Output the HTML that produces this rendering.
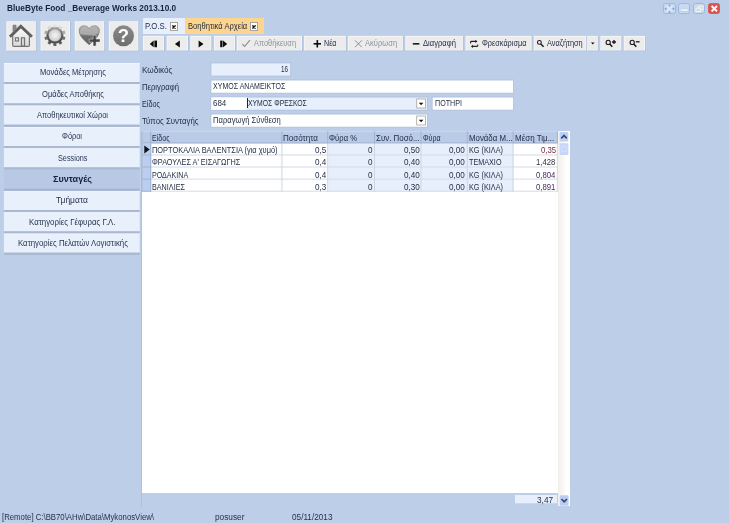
<!DOCTYPE html>
<html lang="el">
<head>
<meta charset="utf-8">
<title>BlueByte Food _Beverage Works 2013.10.0</title>
<style>
html,body{margin:0;padding:0;background:#bdcfe8;}
#w{position:absolute;left:0;top:0;width:729px;height:523px;filter:blur(0.4px);}
body{width:729px;height:523px;overflow:hidden;background:#bdcfe8;position:relative;
 font-family:"Liberation Sans","DejaVu Sans",sans-serif;font-size:8.8px;color:#1e2a40;}
.a{position:absolute;}
.x{position:absolute;white-space:pre;transform-origin:0 50%;}
.cb{position:absolute;width:8px;height:9px;background:#fff;border:1px solid #a9a59c;box-sizing:border-box}
.wc{position:absolute;top:3.3px;width:12.3px;height:10.8px;box-sizing:border-box;border:1px solid #9db8de;border-radius:2.5px;background:#c7daf3}
</style>
</head>
<body>
<div id="w">
<div class="x" style="left:6.60px;top:1.60px;font-size:9.4px;line-height:12px;transform:scaleX(0.8831);font-weight:bold;color:#15233f;">BlueByte Food _Beverage Works 2013.10.0</div>
<div class="wc" style="left:663.3px"></div>
<div class="wc" style="left:678.2px"></div>
<div class="wc" style="left:693.2px"></div>
<div class="wc" style="left:708.2px;background:#d9534f;border-color:#d2605f"></div>
<svg class="a" style="left:660px;top:0" width="64" height="18" viewBox="660 0 64 18">
<path d="M666.6 6L672.4 11.4M672.4 6L666.6 11.4" stroke="#dfeaf9" stroke-width="1.3" fill="none"/>
<g fill="#6f9ad6"><circle cx="669.5" cy="5.3" r="0.9"/><circle cx="669.5" cy="12.1" r="0.9"/><circle cx="665.6" cy="8.7" r="0.9"/><circle cx="673.4" cy="8.7" r="0.9"/></g>
<rect x="680.4" y="9" width="7.8" height="2.1" rx="0.8" fill="#fbfbee" stroke="#a9bfdf" stroke-width="0.4"/>
<g fill="none" stroke="#f3f3e6" stroke-width="1.1"><rect x="698.6" y="6.2" width="4.4" height="3.4"/><rect x="696" y="8.2" width="4.4" height="3.4" fill="#c7daf3"/></g>
<path d="M711.6 6L717 11.4M717 6L711.6 11.4" stroke="#fff" stroke-width="2"/>
</svg>
<svg class="a" style="left:0;top:16px" width="146" height="40" viewBox="0 16 146 40"><rect x="7.10" y="22.00" width="29.40" height="29.30" fill="#a9bbd8"/><rect x="6.40" y="21.30" width="29.40" height="29.30" fill="#f8f8f8"/><rect x="7.20" y="22.10" width="27.80" height="27.70" fill="#ececec"/><rect x="41.30" y="22.00" width="29.40" height="29.30" fill="#a9bbd8"/><rect x="40.60" y="21.30" width="29.40" height="29.30" fill="#f8f8f8"/><rect x="41.40" y="22.10" width="27.80" height="27.70" fill="#ececec"/><rect x="75.50" y="22.00" width="29.40" height="29.30" fill="#a9bbd8"/><rect x="74.80" y="21.30" width="29.40" height="29.30" fill="#f8f8f8"/><rect x="75.60" y="22.10" width="27.80" height="27.70" fill="#ececec"/><rect x="109.60" y="22.00" width="29.40" height="29.30" fill="#a9bbd8"/><rect x="108.90" y="21.30" width="29.40" height="29.30" fill="#f8f8f8"/><rect x="109.70" y="22.10" width="27.80" height="27.70" fill="#ececec"/></svg>
<svg class="a" style="left:0;top:0" width="146" height="56" viewBox="0 0 146 56">
<defs>
<linearGradient id="gv" x1="0" y1="0" x2="0" y2="1"><stop offset="0" stop-color="#a8a8a8"/><stop offset="0.5" stop-color="#5e5e5e"/><stop offset="1" stop-color="#454545"/></linearGradient>
<linearGradient id="gh" x1="0" y1="0" x2="0" y2="1"><stop offset="0" stop-color="#a8a8a8"/><stop offset="0.45" stop-color="#8a8a8a"/><stop offset="0.55" stop-color="#707070"/><stop offset="1" stop-color="#626262"/></linearGradient>
<linearGradient id="gq" x1="0" y1="0" x2="0" y2="1"><stop offset="0" stop-color="#8a8a8a"/><stop offset="1" stop-color="#6e6e6e"/></linearGradient>
<linearGradient id="gb" x1="0" y1="0" x2="0" y2="1"><stop offset="0" stop-color="#fafafa"/><stop offset="1" stop-color="#dadada"/></linearGradient>
<radialGradient id="gr" cx="0.5" cy="0.5" r="0.5"><stop offset="0" stop-color="#ffffff"/><stop offset="0.6" stop-color="#e4e4e4"/><stop offset="1" stop-color="#bdbdbd"/></radialGradient>
</defs>
<!-- house -->
<path d="M13 31.8V25.2H16.1V29" fill="#8a8a8a" stroke="#6a6a6a" stroke-width="0.6"/>
<path d="M12.7 35.2V45.3Q12.7 46.3 13.7 46.3H28.4Q29.4 46.3 29.4 45.3V35.2L21 27.2Z" fill="url(#gb)" stroke="#757575" stroke-width="1.2"/>
<path d="M9.9 36.7L20.8 26.2L31.9 36.7" fill="none" stroke="#606060" stroke-width="2.8" stroke-linejoin="miter"/>
<rect x="15.4" y="37.8" width="3.1" height="3.2" fill="#e2e2e2" stroke="#707070" stroke-width="1.1"/>
<rect x="21.4" y="37.8" width="3.2" height="8.2" fill="#d2d2d2" stroke="#707070" stroke-width="1.1"/>
<!-- gear -->
<g transform="translate(54.9 35.3)">
<circle r="8.5" fill="url(#gv)"/>
<g fill="#5a5a5a">
<rect x="-1.5" y="7.9" width="3" height="2.7"/>
<rect x="-1.5" y="7.9" width="3" height="2.7" transform="rotate(36)"/>
<rect x="-1.5" y="7.9" width="3" height="2.7" transform="rotate(-36)"/>
<rect x="-1.5" y="7.9" width="3" height="2.7" transform="rotate(72)" fill="#6e6e6e"/>
<rect x="-1.5" y="7.9" width="3" height="2.7" transform="rotate(-72)" fill="#6e6e6e"/>
<rect x="-1.5" y="7.9" width="3" height="2.7" transform="rotate(108)" fill="#a6a6a6"/>
<rect x="-1.5" y="7.9" width="3" height="2.7" transform="rotate(-108)" fill="#a6a6a6"/>
<rect x="-1.5" y="7.9" width="3" height="2.7" transform="rotate(144)" fill="#d6d6d6"/>
<rect x="-1.5" y="7.9" width="3" height="2.7" transform="rotate(-144)" fill="#d6d6d6"/>
<rect x="-1.5" y="7.9" width="3" height="2.7" transform="rotate(180)" fill="#e0e0e0"/>
</g>
<circle r="6.3" fill="url(#gr)"/>
<circle r="3.4" fill="none" stroke="#d2d2d2" stroke-width="0.7"/>
<circle r="1.3" fill="#fcfcfc" stroke="#cfcfcf" stroke-width="0.5"/>
</g>
<!-- heart -->
<path d="M89.2 44.9C85 41.5 78.7 36.5 78.7 30.6C78.7 27.2 81.3 25.2 84.2 25.2C86.4 25.2 88.2 26.3 89.2 28C90.2 26.3 92 25.2 94.3 25.2C97.3 25.2 99.9 27.2 99.9 30.6C99.9 36.5 93.5 41.5 89.2 44.9Z" fill="url(#gh)"/>
<path d="M80.2 33.8C79.2 29.5 81.6 26.4 84.4 26.4C86.6 26.4 88.3 27.6 89.2 29.4C90.2 27.6 91.9 26.4 94.2 26.4C97 26.4 99.3 29.2 98.4 33.2C94 35.5 86 36 80.2 33.8Z" fill="#c2c2c2" opacity="0.55"/>
<path d="M93.1 35.2H96.1V39.1H100V42.1H96.1V46H93.1V42.1H89.2V39.1H93.1Z" fill="#454545" stroke="#ececec" stroke-width="0.5"/>
<!-- help -->
<circle cx="123.5" cy="35.8" r="10.5" fill="url(#gq)"/>
<text x="123.5" y="42.4" text-anchor="middle" font-family="Liberation Sans, sans-serif" font-weight="bold" font-size="18.5" fill="#fff">?</text>
</svg>
<div class="a" style="left:142.7px;top:18.2px;width:41.9px;height:16.2px;background:#e6effb"></div>
<div class="x" style="left:145.00px;top:20.20px;font-size:8.8px;line-height:12px;transform:scaleX(0.8837);">P.O.S.</div>
<div class="cb" style="left:170px;top:22px"></div>
<div class="a" style="left:185.4px;top:18.2px;width:78.3px;height:16.2px;background:#fdd58e"></div>
<div class="x" style="left:187.80px;top:20.20px;font-size:8.8px;line-height:12px;transform:scaleX(0.8623);">Βοηθητικά Αρχεία</div>
<div class="cb" style="left:250px;top:22px"></div>
<svg class="a" style="left:172.1px;top:24.7px" width="4" height="4" viewBox="0 0 4 4"><path d="M0.4 0.4L3.6 3.6M3.6 0.4L0.4 3.6" stroke="#111" stroke-width="1.4"/></svg>
<svg class="a" style="left:252.1px;top:24.7px" width="4" height="4" viewBox="0 0 4 4"><path d="M0.4 0.4L3.6 3.6M3.6 0.4L0.4 3.6" stroke="#111" stroke-width="1.4"/></svg>
<svg class="a" style="left:140px;top:32px" width="510" height="22" viewBox="140 32 510 22"><rect x="143.70" y="36.60" width="21.00" height="14.60" fill="#a9bbd8"/><rect x="143.00" y="35.90" width="21.00" height="14.60" fill="#f8f8f8"/><rect x="143.80" y="36.70" width="19.40" height="13.00" fill="#ececec"/><rect x="167.40" y="36.60" width="21.30" height="14.60" fill="#a9bbd8"/><rect x="166.70" y="35.90" width="21.30" height="14.60" fill="#f8f8f8"/><rect x="167.50" y="36.70" width="19.70" height="13.00" fill="#ececec"/><rect x="191.00" y="36.60" width="21.10" height="14.60" fill="#a9bbd8"/><rect x="190.30" y="35.90" width="21.10" height="14.60" fill="#f8f8f8"/><rect x="191.10" y="36.70" width="19.50" height="13.00" fill="#ececec"/><rect x="214.70" y="36.60" width="21.00" height="14.60" fill="#a9bbd8"/><rect x="214.00" y="35.90" width="21.00" height="14.60" fill="#f8f8f8"/><rect x="214.80" y="36.70" width="19.40" height="13.00" fill="#ececec"/><rect x="237.50" y="36.60" width="65.20" height="14.60" fill="#a9bbd8"/><rect x="236.80" y="35.90" width="65.20" height="14.60" fill="#f8f8f8"/><rect x="237.60" y="36.70" width="63.60" height="13.00" fill="#ececec"/><rect x="304.80" y="36.60" width="41.70" height="14.60" fill="#a9bbd8"/><rect x="304.10" y="35.90" width="41.70" height="14.60" fill="#f8f8f8"/><rect x="304.90" y="36.70" width="40.10" height="13.00" fill="#ececec"/><rect x="348.60" y="36.60" width="55.00" height="14.60" fill="#a9bbd8"/><rect x="347.90" y="35.90" width="55.00" height="14.60" fill="#f8f8f8"/><rect x="348.70" y="36.70" width="53.40" height="13.00" fill="#ececec"/><rect x="406.10" y="36.60" width="57.50" height="14.60" fill="#a9bbd8"/><rect x="405.40" y="35.90" width="57.50" height="14.60" fill="#f8f8f8"/><rect x="406.20" y="36.70" width="55.90" height="13.00" fill="#ececec"/><rect x="466.20" y="36.60" width="66.10" height="14.60" fill="#a9bbd8"/><rect x="465.50" y="35.90" width="66.10" height="14.60" fill="#f8f8f8"/><rect x="466.30" y="36.70" width="64.50" height="13.00" fill="#ececec"/><rect x="534.50" y="36.60" width="52.50" height="14.60" fill="#a9bbd8"/><rect x="533.80" y="35.90" width="52.50" height="14.60" fill="#f8f8f8"/><rect x="534.60" y="36.70" width="50.90" height="13.00" fill="#ececec"/><rect x="588.00" y="36.60" width="10.50" height="14.60" fill="#a9bbd8"/><rect x="587.30" y="35.90" width="10.50" height="14.60" fill="#f8f8f8"/><rect x="588.10" y="36.70" width="8.90" height="13.00" fill="#ececec"/><rect x="601.10" y="36.60" width="21.00" height="14.60" fill="#a9bbd8"/><rect x="600.40" y="35.90" width="21.00" height="14.60" fill="#f8f8f8"/><rect x="601.20" y="36.70" width="19.40" height="13.00" fill="#ececec"/><rect x="624.50" y="36.60" width="21.30" height="14.60" fill="#a9bbd8"/><rect x="623.80" y="35.90" width="21.30" height="14.60" fill="#f8f8f8"/><rect x="624.60" y="36.70" width="19.70" height="13.00" fill="#ececec"/></svg>
<div class="x" style="left:254.20px;top:37.30px;font-size:8.6px;line-height:12px;transform:scaleX(0.8607);color:#8d939c;">Αποθήκευση</div>
<div class="x" style="left:323.80px;top:37.30px;font-size:8.6px;line-height:12px;transform:scaleX(0.8258);">Νέα</div>
<div class="x" style="left:365.30px;top:37.30px;font-size:8.6px;line-height:12px;transform:scaleX(0.8813);color:#8d939c;">Ακύρωση</div>
<div class="x" style="left:422.70px;top:37.30px;font-size:8.6px;line-height:12px;transform:scaleX(0.8862);">Διαγραφή</div>
<div class="x" style="left:482.00px;top:37.30px;font-size:8.6px;line-height:12px;transform:scaleX(0.8528);">Φρεσκάρισμα</div>
<div class="x" style="left:547.30px;top:37.30px;font-size:8.6px;line-height:12px;transform:scaleX(0.8599);">Αναζήτηση</div>
<svg class="a" style="left:140px;top:34px" width="520" height="20" viewBox="140 34 520 20">
<g fill="#0c0c0c">
<path d="M149.8 43.9L153.7 40.6V47.2Z"/><rect x="154.4" y="40.6" width="2.6" height="6.6"/>
<path d="M174.9 43.9L179.8 40.4V47.4Z"/>
<path d="M203.5 43.9L198.6 40.4V47.4Z"/>
<rect x="220.2" y="40.6" width="2.3" height="6.6"/><path d="M227.2 43.9L223 40.6V47.2Z"/>
<rect x="313.6" y="43" width="7.4" height="1.6"/><rect x="316.5" y="40.1" width="1.6" height="7.4"/>
<rect x="412.8" y="43.1" width="6.6" height="1.5"/>
<path d="M591 42.6H594.6L592.8 44.6Z"/>
</g>
<path d="M242.2 43.8L244.6 46.4L250 40.2" fill="none" stroke="#8a8f96" stroke-width="1.1"/>
<path d="M355 40.4L361.8 47.2M361.8 40.4L355 47.2" fill="none" stroke="#8a8f96" stroke-width="1"/>
<g fill="none" stroke="#222" stroke-width="1.1">
<path d="M470.6 43.4V42.2Q470.6 41.4 471.4 41.4H476.6"/><path d="M475.4 39.8L477.4 41.4L475.4 43" fill="#222" stroke="none"/>
<path d="M477.8 44.4V45.6Q477.8 46.4 477 46.4H471.8"/><path d="M473 44.8L471 46.4L473 48" fill="#222" stroke="none"/>
</g>
<g fill="none" stroke="#1a1a1a">
<circle cx="539.4" cy="42.4" r="1.9" stroke-width="1.1"/><path d="M540.8 43.9L543.6 46.8" stroke-width="1.5"/>
<circle cx="608.2" cy="42.4" r="2.1" stroke-width="1.1"/><path d="M609.7 44L612.3 46.8" stroke-width="1.5"/>
<path d="M612 42H616M614 40V44" stroke-width="1.3"/>
<circle cx="632.2" cy="42.4" r="2.1" stroke-width="1.1"/><path d="M633.7 44L636.3 46.8" stroke-width="1.5"/>
<path d="M635.8 41.8H639.6" stroke-width="1.3"/>
</g>
</svg>
<svg class="a" style="left:0;top:56px" width="146" height="204" viewBox="0 56 146 204"><rect x="3.9" y="63.00" width="135.8" height="19.1" fill="#e7f0fb"/><rect x="3.9" y="63.00" width="135.8" height="0.7" fill="#f3f7fd"/><rect x="3.9" y="82.00" width="135.8" height="2.3" fill="#a9b9d1"/><rect x="3.9" y="84.33" width="135.8" height="19.1" fill="#e7f0fb"/><rect x="3.9" y="84.33" width="135.8" height="0.7" fill="#f3f7fd"/><rect x="3.9" y="103.33" width="135.8" height="2.3" fill="#a9b9d1"/><rect x="3.9" y="105.66" width="135.8" height="19.1" fill="#e7f0fb"/><rect x="3.9" y="105.66" width="135.8" height="0.7" fill="#f3f7fd"/><rect x="3.9" y="124.66" width="135.8" height="2.3" fill="#a9b9d1"/><rect x="3.9" y="126.99" width="135.8" height="19.1" fill="#e7f0fb"/><rect x="3.9" y="126.99" width="135.8" height="0.7" fill="#f3f7fd"/><rect x="3.9" y="145.99" width="135.8" height="2.3" fill="#a9b9d1"/><rect x="3.9" y="148.32" width="135.8" height="19.1" fill="#e7f0fb"/><rect x="3.9" y="148.32" width="135.8" height="0.7" fill="#f3f7fd"/><rect x="3.9" y="167.32" width="135.8" height="2.3" fill="#a9b9d1"/><rect x="3.9" y="169.65" width="135.8" height="19.1" fill="#b8c9e5"/><rect x="3.9" y="188.65" width="135.8" height="2.3" fill="#a5b6d0"/><rect x="3.9" y="190.98" width="135.8" height="19.1" fill="#e7f0fb"/><rect x="3.9" y="190.98" width="135.8" height="0.7" fill="#f3f7fd"/><rect x="3.9" y="209.98" width="135.8" height="2.3" fill="#a9b9d1"/><rect x="3.9" y="212.31" width="135.8" height="19.1" fill="#e7f0fb"/><rect x="3.9" y="212.31" width="135.8" height="0.7" fill="#f3f7fd"/><rect x="3.9" y="231.31" width="135.8" height="2.3" fill="#a9b9d1"/><rect x="3.9" y="233.64" width="135.8" height="19.1" fill="#e7f0fb"/><rect x="3.9" y="233.64" width="135.8" height="0.7" fill="#f3f7fd"/><rect x="3.9" y="252.64" width="135.8" height="2.3" fill="#a9b9d1"/></svg>
<div class="x" style="left:39.50px;top:66.40px;font-size:8.8px;line-height:12px;transform:scaleX(0.8614);color:#2a3550;">Μονάδες Μέτρησης</div>
<div class="x" style="left:41.50px;top:87.73px;font-size:8.8px;line-height:12px;transform:scaleX(0.8606);color:#2a3550;">Ομάδες Αποθήκης</div>
<div class="x" style="left:36.50px;top:109.06px;font-size:8.8px;line-height:12px;transform:scaleX(0.8532);color:#2a3550;">Αποθηκευτικοί Χώροι</div>
<div class="x" style="left:62.00px;top:130.39px;font-size:8.8px;line-height:12px;transform:scaleX(0.8416);color:#2a3550;">Φόροι</div>
<div class="x" style="left:57.50px;top:151.72px;font-size:8.8px;line-height:12px;transform:scaleX(0.8263);color:#2a3550;">Sessions</div>
<div class="x" style="left:53.00px;top:173.05px;font-size:9.6px;line-height:12px;transform:scaleX(0.9455);font-weight:bold;color:#15233f;">Συνταγές</div>
<div class="x" style="left:56.00px;top:194.38px;font-size:8.8px;line-height:12px;transform:scaleX(0.9615);color:#2a3550;">Τμήματα</div>
<div class="x" style="left:29.00px;top:215.71px;font-size:8.8px;line-height:12px;transform:scaleX(0.8939);color:#2a3550;">Κατηγορίες Γέφυρας Γ.Λ.</div>
<div class="x" style="left:17.60px;top:237.04px;font-size:8.8px;line-height:12px;transform:scaleX(0.8879);color:#2a3550;">Κατηγορίες Πελατών Λογιστικής</div>
<div class="x" style="left:142.00px;top:63.80px;font-size:8.8px;line-height:12px;transform:scaleX(0.9269);">Κωδικός</div>
<div class="x" style="left:142.00px;top:81.30px;font-size:8.8px;line-height:12px;transform:scaleX(0.8741);">Περιγραφή</div>
<div class="x" style="left:142.00px;top:98.20px;font-size:8.8px;line-height:12px;transform:scaleX(0.8234);">Είδος</div>
<div class="x" style="left:142.00px;top:114.60px;font-size:8.8px;line-height:12px;transform:scaleX(0.8889);">Τύπος Συνταγής</div>
<svg class="a" style="left:205px;top:58px" width="315" height="74" viewBox="205 58 315 74"><rect x="210.95" y="62.95" width="79.80" height="13.1" fill="#e6effb" stroke="#a7b8d5" stroke-width="0.7"/><rect x="210.95" y="80.05" width="302.60" height="13.1" fill="#fff" stroke="#a7b8d5" stroke-width="0.7"/><rect x="210.95" y="97.05" width="216.40" height="13.1" fill="#e6effb" stroke="#a7b8d5" stroke-width="0.7"/><rect x="211.3" y="97.4" width="35.4" height="12.4" fill="#fff"/><rect x="432.15" y="97.05" width="81.40" height="13.1" fill="#fff" stroke="#a7b8d5" stroke-width="0.7"/><rect x="210.95" y="114.05" width="216.40" height="13.1" fill="#fff" stroke="#a7b8d5" stroke-width="0.7"/></svg>
<div class="x" style="left:280.60px;top:63.40px;font-size:9px;line-height:12px;transform:scaleX(0.6989);">16</div>
<div class="x" style="left:212.70px;top:80.30px;font-size:9px;line-height:12px;transform:scaleX(0.7818);">ΧΥΜΟΣ ΑΝΑΜΕΙΚΤΟΣ</div>
<div class="x" style="left:212.70px;top:97.30px;font-size:9px;line-height:12px;transform:scaleX(0.8848);">684</div>
<div class="a" style="left:246.8px;top:98.4px;width:1px;height:9.8px;background:#222"></div>
<div class="x" style="left:248.20px;top:97.30px;font-size:9px;line-height:12px;transform:scaleX(0.7576);">ΧΥΜΟΣ ΦΡΕΣΚΟΣ</div>
<div class="x" style="left:434.50px;top:97.30px;font-size:9px;line-height:12px;transform:scaleX(0.7938);">ΠΟΤΗΡΙ</div>
<div class="x" style="left:212.70px;top:114.30px;font-size:9px;line-height:12px;transform:scaleX(0.8462);">Παραγωγή Σύνθεση</div>
<svg class="a" style="left:412px;top:94px" width="18" height="36" viewBox="412 94 18 36"><rect x="416.7" y="99.00" width="8.8" height="9" fill="#fff" stroke="#a9a59c" stroke-width="0.8"/><path d="M418.8 102.70H423.4L421.1 105.30Z" fill="#111"/><rect x="416.7" y="116.00" width="8.8" height="9" fill="#fff" stroke="#a9a59c" stroke-width="0.8"/><path d="M418.8 119.70H423.4L421.1 122.30Z" fill="#111"/></svg>
<div class="a" style="left:142px;top:131px;width:428.2px;height:361.6px;background:#fff"></div><div class="a" style="left:140.6px;top:131.5px;width:1.4px;height:375.5px;background:#acc0e0"></div>
<div class="a" style="left:558.2px;top:131px;width:12px;height:375.4px;background:linear-gradient(90deg,#f1efe9,#ffffff 75%)"></div>
<svg class="a" style="left:138px;top:128px" width="424" height="68" viewBox="138 128 424 68"><rect x="142.3" y="131.3" width="415.5" height="12.1" fill="#b9cbe6"/><rect x="142.3" y="131.3" width="415.5" height="0.8" fill="#c9d8ee"/><rect x="142.3" y="143.4" width="8.9" height="48.3" fill="#bccef0"/><rect x="328.2" y="143.4" width="185.3" height="48.3" fill="#e6effb"/><rect x="151.2" y="154.5" width="406.6" height="1" fill="#d3dbe8"/><rect x="142.3" y="154.5" width="8.9" height="1" fill="#9fb3d2"/><rect x="151.2" y="166.5" width="406.6" height="1" fill="#d3dbe8"/><rect x="142.3" y="166.5" width="8.9" height="1" fill="#9fb3d2"/><rect x="151.2" y="178.6" width="406.6" height="1" fill="#d3dbe8"/><rect x="142.3" y="178.6" width="8.9" height="1" fill="#9fb3d2"/><rect x="151.2" y="190.7" width="406.6" height="1" fill="#d3dbe8"/><rect x="142.3" y="190.7" width="8.9" height="1" fill="#9fb3d2"/><rect x="281.4" y="143.4" width="1" height="48.3" fill="#cdd6e4"/><rect x="327.2" y="143.4" width="1" height="48.3" fill="#cdd6e4"/><rect x="374.0" y="143.4" width="1" height="48.3" fill="#cdd6e4"/><rect x="420.5" y="143.4" width="1" height="48.3" fill="#cdd6e4"/><rect x="466.8" y="143.4" width="1" height="48.3" fill="#cdd6e4"/><rect x="512.5" y="143.4" width="1" height="48.3" fill="#cdd6e4"/><rect x="556.8" y="143.4" width="1" height="48.3" fill="#cdd6e4"/><rect x="150.2" y="143.4" width="1" height="48.3" fill="#9fb3d2"/><rect x="150.2" y="131.3" width="1" height="12.1" fill="#9fb3d2"/><rect x="281.4" y="131.3" width="1" height="12.1" fill="#9fb3d2"/><rect x="327.2" y="131.3" width="1" height="12.1" fill="#9fb3d2"/><rect x="374.0" y="131.3" width="1" height="12.1" fill="#9fb3d2"/><rect x="420.5" y="131.3" width="1" height="12.1" fill="#9fb3d2"/><rect x="466.8" y="131.3" width="1" height="12.1" fill="#9fb3d2"/><rect x="512.5" y="131.3" width="1" height="12.1" fill="#9fb3d2"/><rect x="556.8" y="131.3" width="1" height="12.1" fill="#9fb3d2"/><rect x="142.3" y="142.4" width="415.5" height="1" fill="#9fb3d2"/><rect x="141.7" y="131.3" width="0.9" height="60.4" fill="#a3b4d0"/><path d="M144.3 145.6L149.7 149.5L144.3 153.4Z" fill="#111"/></svg>
<div class="x" style="left:152.20px;top:131.90px;font-size:8.8px;line-height:12px;transform:scaleX(0.8051);">Είδος</div>
<div class="x" style="left:283.40px;top:131.90px;font-size:8.8px;line-height:12px;transform:scaleX(0.9150);">Ποσότητα</div>
<div class="x" style="left:329.20px;top:131.90px;font-size:8.8px;line-height:12px;transform:scaleX(0.8699);">Φύρα %</div>
<div class="x" style="left:376.00px;top:131.90px;font-size:8.8px;line-height:12px;transform:scaleX(0.8981);">Συν. Ποσό...</div>
<div class="x" style="left:422.50px;top:131.90px;font-size:8.8px;line-height:12px;transform:scaleX(0.7983);">Φύρα</div>
<div class="x" style="left:468.80px;top:131.90px;font-size:8.8px;line-height:12px;transform:scaleX(0.8915);">Μονάδα Μ...</div>
<div class="x" style="left:514.50px;top:131.90px;font-size:8.8px;line-height:12px;transform:scaleX(0.9083);">Μέση Τιμ...</div>
<div class="x" style="left:152.30px;top:143.80px;font-size:9px;line-height:12px;transform:scaleX(0.8230);">ΠΟΡΤΟΚΑΛΙΑ ΒΑΛΕΝΤΣΙΑ (για χυμό)</div>
<div class="x" style="left:315.44px;top:143.80px;font-size:9px;line-height:12px;transform:scaleX(0.9000);">0,5</div>
<div class="x" style="left:368.49px;top:143.80px;font-size:9px;line-height:12px;transform:scaleX(0.9000);">0</div>
<div class="x" style="left:403.72px;top:143.80px;font-size:9px;line-height:12px;transform:scaleX(0.9000);">0,50</div>
<div class="x" style="left:449.02px;top:143.80px;font-size:9px;line-height:12px;transform:scaleX(0.9000);">0,00</div>
<div class="x" style="left:468.90px;top:143.80px;font-size:9px;line-height:12px;transform:scaleX(0.8089);">KG (ΚΙΛΑ)</div>
<div class="x" style="left:540.62px;top:143.80px;font-size:9px;line-height:12px;transform:scaleX(0.8600);color:#7a2a3a;">0,35</div>
<div class="x" style="left:152.30px;top:155.90px;font-size:9px;line-height:12px;transform:scaleX(0.8112);">ΦΡΑΟΥΛΕΣ Α' ΕΙΣΑΓΩΓΗΣ</div>
<div class="x" style="left:315.44px;top:155.90px;font-size:9px;line-height:12px;transform:scaleX(0.9000);">0,4</div>
<div class="x" style="left:368.49px;top:155.90px;font-size:9px;line-height:12px;transform:scaleX(0.9000);">0</div>
<div class="x" style="left:403.72px;top:155.90px;font-size:9px;line-height:12px;transform:scaleX(0.9000);">0,40</div>
<div class="x" style="left:449.02px;top:155.90px;font-size:9px;line-height:12px;transform:scaleX(0.9000);">0,00</div>
<div class="x" style="left:468.90px;top:155.90px;font-size:9px;line-height:12px;transform:scaleX(0.8022);">ΤΕΜΑΧΙΟ</div>
<div class="x" style="left:536.32px;top:155.90px;font-size:9px;line-height:12px;transform:scaleX(0.8600);color:#333338;">1,428</div>
<div class="x" style="left:152.30px;top:168.50px;font-size:9px;line-height:12px;transform:scaleX(0.7896);">ΡΟΔΑΚΙΝΑ</div>
<div class="x" style="left:315.44px;top:168.50px;font-size:9px;line-height:12px;transform:scaleX(0.9000);">0,4</div>
<div class="x" style="left:368.49px;top:168.50px;font-size:9px;line-height:12px;transform:scaleX(0.9000);">0</div>
<div class="x" style="left:403.72px;top:168.50px;font-size:9px;line-height:12px;transform:scaleX(0.9000);">0,40</div>
<div class="x" style="left:449.02px;top:168.50px;font-size:9px;line-height:12px;transform:scaleX(0.9000);">0,00</div>
<div class="x" style="left:468.90px;top:168.50px;font-size:9px;line-height:12px;transform:scaleX(0.8089);">KG (ΚΙΛΑ)</div>
<div class="x" style="left:536.32px;top:168.50px;font-size:9px;line-height:12px;transform:scaleX(0.8600);color:#4a2a5a;">0,804</div>
<div class="x" style="left:152.30px;top:180.60px;font-size:9px;line-height:12px;transform:scaleX(0.8006);">ΒΑΝΙΛΙΕΣ</div>
<div class="x" style="left:315.44px;top:180.60px;font-size:9px;line-height:12px;transform:scaleX(0.9000);">0,3</div>
<div class="x" style="left:368.49px;top:180.60px;font-size:9px;line-height:12px;transform:scaleX(0.9000);">0</div>
<div class="x" style="left:403.72px;top:180.60px;font-size:9px;line-height:12px;transform:scaleX(0.9000);">0,30</div>
<div class="x" style="left:449.02px;top:180.60px;font-size:9px;line-height:12px;transform:scaleX(0.9000);">0,00</div>
<div class="x" style="left:468.90px;top:180.60px;font-size:9px;line-height:12px;transform:scaleX(0.8089);">KG (ΚΙΛΑ)</div>
<div class="x" style="left:536.32px;top:180.60px;font-size:9px;line-height:12px;transform:scaleX(0.8600);color:#4a2a5a;">0,891</div>
<svg class="a" style="left:556px;top:128px" width="18" height="382" viewBox="556 128 18 382">
<rect x="559.6" y="132" width="8.7" height="9.4" rx="1" fill="#c0cff6"/>
<path d="M561.3 138.3L564 135.5L566.7 138.3" stroke="#34466e" stroke-width="1.7" fill="none"/>
<rect x="559.6" y="143.2" width="8.8" height="11.8" rx="1" fill="#c6d5f8"/>
<rect x="561.8" y="146.2" width="4.4" height="5.6" fill="none" stroke="#d9e4fb" stroke-width="0.8"/>
<rect x="559.8" y="495.2" width="8.8" height="10.6" rx="1" fill="#bccdf3"/>
<path d="M561.5 499L564.2 501.8L566.9 499" stroke="#34466e" stroke-width="1.7" fill="none"/>
</svg>
<div class="a" style="left:514.6px;top:495.3px;width:42px;height:9px;background:#e6effb;border-bottom:1px solid #cbd6e8;box-sizing:border-box"></div>
<div class="x" style="left:537.30px;top:493.80px;font-size:8.6px;line-height:12px;transform:scaleX(0.9621);">3,47</div>
<div class="x" style="left:2.20px;top:510.60px;font-size:8.4px;line-height:12px;transform:scaleX(0.9285);color:#27324a;">[Remote] C:\BB70\AHw\Data\MykonosView\</div>
<div class="x" style="left:215.00px;top:510.60px;font-size:8.4px;line-height:12px;transform:scaleX(0.9900);color:#27324a;">posuser</div>
<div class="x" style="left:292.00px;top:510.60px;font-size:8.4px;line-height:12px;transform:scaleX(0.9807);color:#27324a;">05/11/2013</div>
</div>
</body>
</html>
